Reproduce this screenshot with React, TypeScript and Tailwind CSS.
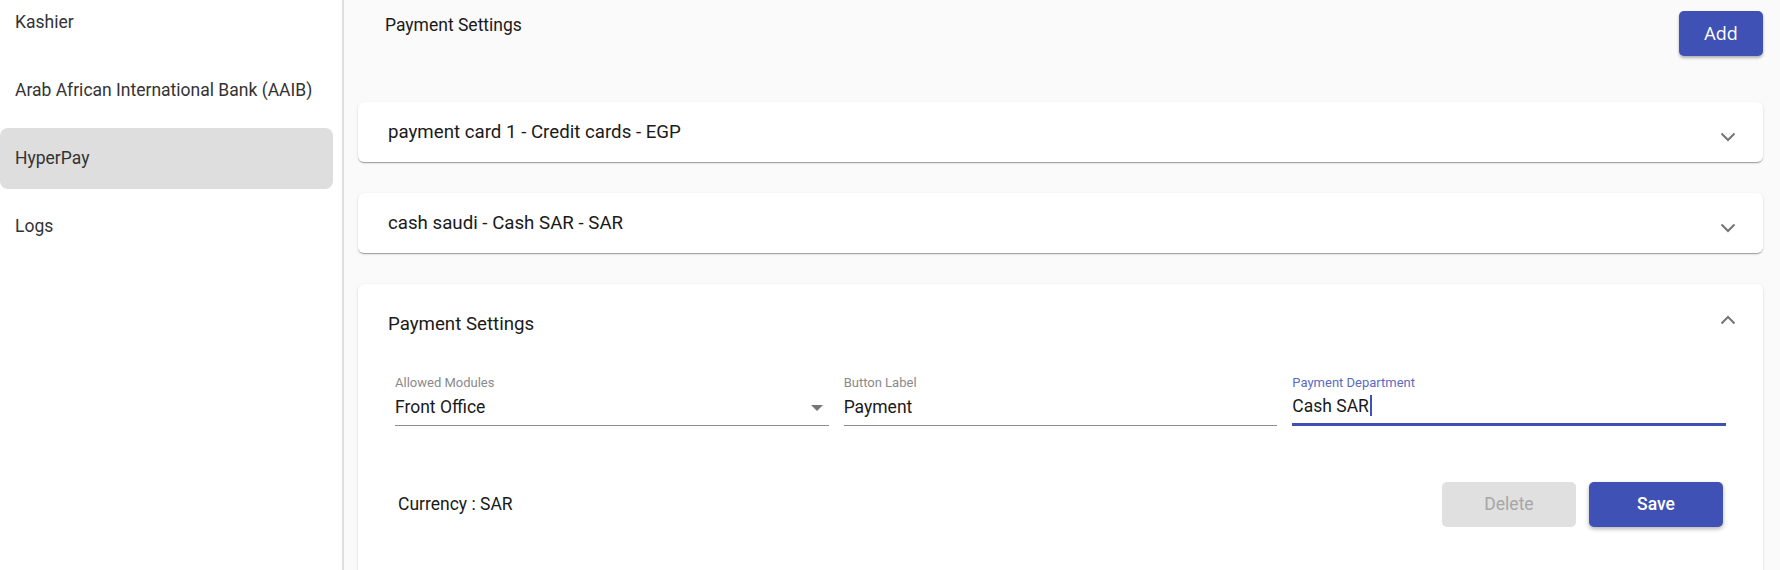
import { useState } from "react";

// Платёжные шлюзы: слева список провайдеров, справа аккордеон с
// настройками способов оплаты выбранного шлюза.

const PROVIDERS = ["Kashier", "Arab African International Bank (AAIB)", "HyperPay", "Logs"];

const METHODS = [
  { id: 1, title: "payment card 1 - Credit cards - EGP" },
  { id: 2, title: "cash saudi - Cash SAR - SAR" },
];

function Chevron({ up = false }: { up?: boolean }) {
  return (
    <svg width="16" height="10" viewBox="0 0 16 10" className={up ? "rotate-180" : ""}>
      <path d="M1.5 1.5 8 8l6.5-6.5" fill="none" stroke="#757575" strokeWidth="2" />
    </svg>
  );
}

function Field({
  label,
  value,
  focused = false,
  select = false,
}: {
  label: string;
  value: string;
  focused?: boolean;
  select?: boolean;
}) {
  return (
    <div className="flex flex-col">
      <span className={`text-[13px] leading-[14px] ${focused ? "text-[#5c6bc0]" : "text-[#8a8a8a]"}`}>
        {label}
      </span>
      <div
        className={`mt-[4px] flex h-[32px] items-center justify-between pb-[4px] ${
          focused ? "border-b-[3px] border-[#3f51b5]" : "border-b border-[#8d8d8d]"
        }`}
      >
        <span className="text-[17.5px] text-[#1a1a1a]">
          {value}
          {focused && <span className="ml-[1px] inline-block h-[21px] w-[2px] -mb-[4px] bg-[#3f51b5]" />}
        </span>
        {select && (
          <svg width="12" height="6" viewBox="0 0 12 6" className="mr-[6px]">
            <path d="M0 0h12L6 6z" fill="#757575" />
          </svg>
        )}
      </div>
    </div>
  );
}

export default function App() {
  const [active] = useState("HyperPay");

  return (
    <div className="flex h-[570px] w-[1780px] overflow-hidden bg-[#fafafa] font-['Roboto',sans-serif]">
      <aside className="w-[344px] shrink-0 border-r-[2px] border-[#dedede] bg-white pr-[9px]">
        <nav className="-mt-[8px] flex flex-col gap-[7px]">
          {PROVIDERS.map((p) => (
            <div
              key={p}
              className={`flex h-[61px] items-center rounded-[8px] px-[15px] text-[17.5px] text-[#333333] ${
                p === active ? "bg-[#dedede]" : ""
              }`}
            >
              {p}
            </div>
          ))}
        </nav>
      </aside>

      <main className="flex-1 pl-[14px] pr-[17px]">
        <div className="flex items-start justify-between">
          <h1 className="pl-[27px] pt-[13px] text-[17.5px] leading-6 text-[#1a1a1a]">Payment Settings</h1>
          <button className="mt-[11px] h-[45px] w-[84px] rounded-[5px] bg-[#3f51b5] text-[18px] font-medium text-white shadow-[0_2px_3px_rgba(0,0,0,0.3)] font-['Open_Sans',sans-serif]">
            Add
          </button>
        </div>

        <div className="mt-[46px] flex flex-col gap-[31px]">
          {METHODS.map((m) => (
            <div
              key={m.id}
              className="flex h-[60px] items-center justify-between rounded-[6px] bg-white pl-[30px] pr-[27px] shadow-[0_2px_1px_-1px_rgba(0,0,0,0.2),0_1px_1px_0_rgba(0,0,0,0.14),0_1px_3px_0_rgba(0,0,0,0.12)]"
            >
              <span className="text-[18.7px] text-[#1a1a1a]">{m.title}</span>
              <span className="mt-[10px]">
                <Chevron />
              </span>
            </div>
          ))}

          <div className="h-[320px] rounded-[6px] bg-white shadow-[0_2px_1px_-1px_rgba(0,0,0,0.2),0_1px_1px_0_rgba(0,0,0,0.14),0_1px_3px_0_rgba(0,0,0,0.12)]">
            <div className="flex h-[80px] items-center justify-between pl-[30px] pr-[27px]">
              <span className="text-[18.7px] text-[#1a1a1a]">Payment Settings</span>
              <span className="-mt-[8px]">
                <Chevron up />
              </span>
            </div>
            <div className="grid grid-cols-3 gap-[15px] px-[37px] pt-[12px]">
              <Field label="Allowed Modules" value="Front Office" select />
              <Field label="Button Label" value="Payment" />
              <Field label="Payment Department" value="Cash SAR" focused />
            </div>
            <div className="mt-[56px] flex items-center justify-between pl-[40px] pr-[40px]">
              <span className="text-[17.5px] text-[#1a1a1a]">Currency : SAR</span>
              <div className="flex gap-[13px]">
                <button
                  disabled
                  className="h-[45px] w-[134px] rounded-[5px] bg-[#e0e0e0] text-[17.5px] text-[#a6a6a6]"
                >
                  Delete
                </button>
                <button className="h-[45px] w-[134px] rounded-[5px] bg-[#3f51b5] text-[17.5px] font-medium text-white shadow-[0_2px_4px_rgba(0,0,0,0.3)]">
                  Save
                </button>
              </div>
            </div>
          </div>
        </div>
      </main>
    </div>
  );
}
